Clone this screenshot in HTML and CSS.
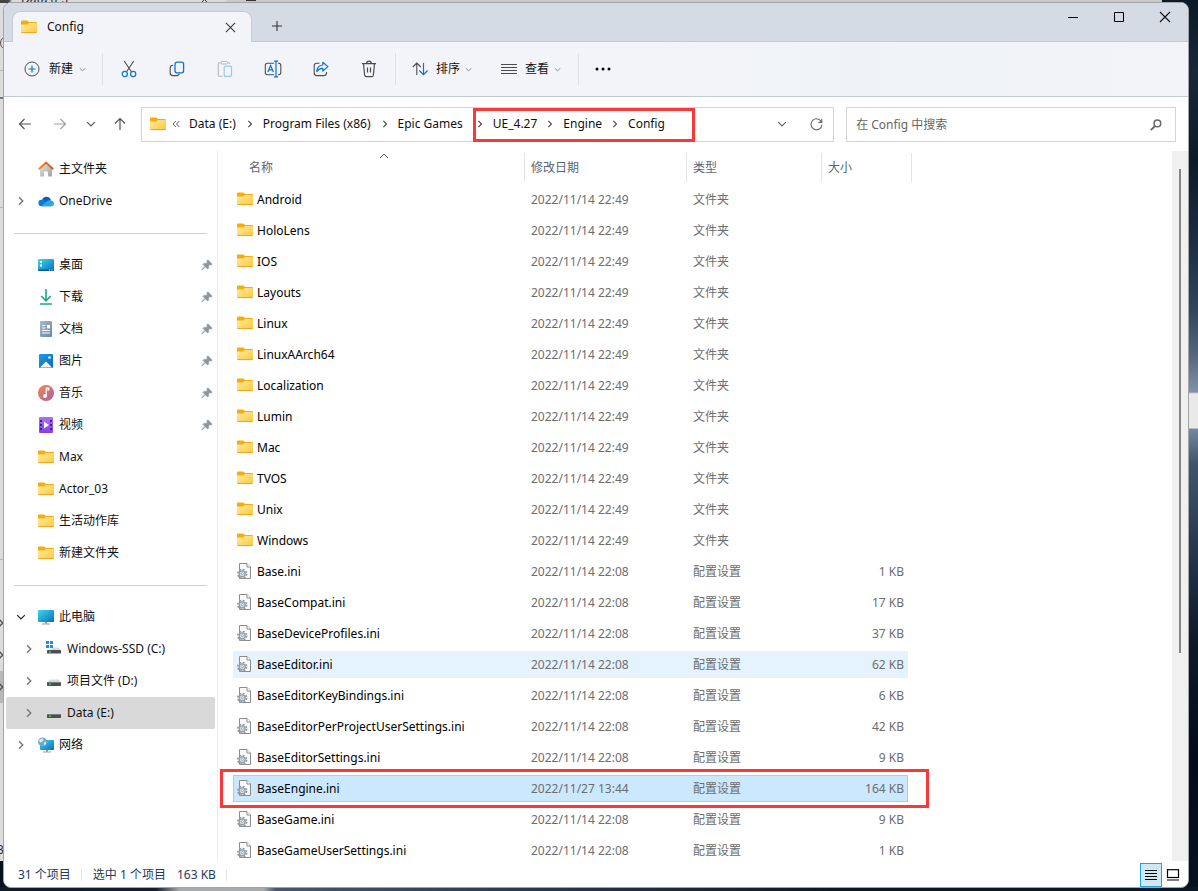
FILE: index.html
```html
<!DOCTYPE html>
<html lang="zh-CN">
<head>
<meta charset="utf-8">
<title>Config</title>
<link rel="stylesheet" href="styles.css">
</head>
<body>
<svg class="defs" width="0" height="0" aria-hidden="true">
  <defs>
    <linearGradient id="gFolder" x1="0" y1="0" x2="1" y2="1"><stop offset="0" stop-color="#ffe9a2"/><stop offset="1" stop-color="#fdc93a"/></linearGradient>
    <linearGradient id="gScreen" x1="0" y1="0" x2="1" y2="1"><stop offset="0" stop-color="#3ddbe2"/><stop offset="1" stop-color="#0a6cc4"/></linearGradient>
    <linearGradient id="gHome" x1="0" y1="0" x2="1" y2="1"><stop offset="0" stop-color="#e6e6e6"/><stop offset="1" stop-color="#a2a2a2"/></linearGradient>
    <linearGradient id="gRoof" x1="0" y1="0" x2="1" y2="0"><stop offset="0" stop-color="#f08a24"/><stop offset="1" stop-color="#d8531b"/></linearGradient>
    <linearGradient id="gDoc" x1="0" y1="0" x2="1" y2="1"><stop offset="0" stop-color="#a9bccf"/><stop offset="1" stop-color="#6785a5"/></linearGradient>
    <linearGradient id="gPic" x1="0" y1="0" x2="1" y2="1"><stop offset="0" stop-color="#1d9be8"/><stop offset="1" stop-color="#0a68bd"/></linearGradient>
    <linearGradient id="gMusic" x1="0" y1="0" x2="1" y2="1"><stop offset="0" stop-color="#f08a52"/><stop offset="1" stop-color="#b25a9e"/></linearGradient>
    <linearGradient id="gVideo" x1="0" y1="0" x2="0" y2="1"><stop offset="0" stop-color="#a873f0"/><stop offset="1" stop-color="#8a3de6"/></linearGradient>
  </defs>
  <symbol id="folder" viewBox="0 0 16 16">
    <path d="M0 2.5Q0 1.5 1 1.5H6Q6.6 1.5 7 2L8 3H15Q16 3 16 4V8H0Z" fill="#f5ad0b"/>
    <path d="M0 5.5H6.2L8 4H15Q16 4 16 5V13Q16 14 15 14H1Q0 14 0 13Z" fill="url(#gFolder)"/>
    <path d="M.4 13.6H15.6" stroke="#e3a21c" stroke-width=".9"/>
  </symbol>
  <symbol id="ini" viewBox="0 0 16 16">
    <path d="M2.5.5H10L13.5 4V15.5H2.5Z" fill="#f9f9f9" stroke="#8c8c8c"/>
    <path d="M10 .5V4H13.5" fill="#fff" stroke="#8c8c8c"/>
    <circle cx="5.2" cy="10.8" r="4.4" fill="none" stroke="#8e979d" stroke-width="1.6" stroke-dasharray="1.9 1.55"/>
    <circle cx="5.2" cy="10.8" r="3" fill="#e3e7ea" stroke="#929ba1" stroke-width="1.3"/>
    <circle cx="5.2" cy="10.8" r="1.1" fill="#fff" stroke="#929ba1" stroke-width=".8"/>
  </symbol>
  <symbol id="pin" viewBox="0 0 12 12">
    <path d="M6.8.8 11.2 5.2 10 5.9 8.5 5.8 7.5 7 7.6 9.2 6.6 10 4.4 7.8 1.2 11 .8 11 1 10.5 3.9 7.3 1.9 5.3 2.8 4.4 5 4.5 6.2 3.5 6 1.8Z" fill="#8b979f" stroke="#8b979f" stroke-width=".6"/>
  </symbol>
  <symbol id="right" viewBox="0 0 10 10"><path d="M3 1.2 6.8 5 3 8.8" fill="none" stroke="currentColor" stroke-width="1.4"/></symbol>
  <symbol id="down" viewBox="0 0 10 10"><path d="M1.2 3.2 5 7 8.8 3.2" fill="none" stroke="currentColor" stroke-width="1.2"/></symbol>
  <symbol id="drive" viewBox="0 0 16 16">
    <path d="M3.5 6.5H12.5L15 9.5H1Z" fill="#d8dbdd"/><rect x="1" y="9" width="14" height="4" rx=".7" fill="#4b4f52"/><rect x="1" y="9" width="14" height="1" fill="#777b7e"/><rect x="3" y="10.5" width="2" height="1.4" fill="#33e033"/>
  </symbol>
  <symbol id="close" viewBox="0 0 12 12"><path d="M1 1 11 11M11 1 1 11" stroke="currentColor" stroke-width="1.1"/></symbol>
</svg>

<div class="back-window" aria-hidden="true">
  <span class="back-title">Data (E:)</span>
  <svg class="back-close" width="9" height="9"><use href="#close"/></svg>
  <span class="back-plus"></span>
  <span class="back-line back-line-a"></span>
  <span class="back-line back-line-b"></span>
  <span class="back-line back-line-c"></span>
  <span class="back-line back-line-d"></span>
  <span class="back-circle"></span>
  <span class="back-selected"></span>
  <svg class="back-arrow back-arrow-a" width="10" height="10"><use href="#right"/></svg>
  <svg class="back-arrow back-arrow-b" width="10" height="10"><use href="#right"/></svg>
  <svg class="back-arrow back-arrow-c" width="10" height="10"><use href="#right"/></svg>
  <span class="back-count">3</span>
</div>

<div class="window">
  <header class="titlebar">
    <div class="tab">
      <svg class="icon" width="16" height="16"><use href="#folder"/></svg>
      <span class="tab-title">Config</span>
      <button class="tab-close" aria-label="关闭标签页"><svg width="11" height="11"><use href="#close"/></svg></button>
    </div>
    <button class="tab-new" aria-label="新标签页"><svg width="12" height="12" viewBox="0 0 12 12"><path d="M6 1V11M1 6H11" stroke="#333" stroke-width="1.1"/></svg></button>
    <div class="caption">
      <button aria-label="最小化"><svg width="12" height="12"><path d="M1 6.5H11" stroke="#000"/></svg></button>
      <button aria-label="最大化"><svg width="12" height="12"><rect x="1.5" y="1.5" width="9" height="9" rx=".6" fill="none" stroke="#000" stroke-width="1.1"/></svg></button>
      <button aria-label="关闭"><svg width="12" height="12"><use href="#close"/></svg></button>
    </div>
  </header>

  <div class="toolbar">
    <button class="tool new">
      <svg width="16" height="16" viewBox="0 0 16 16" fill="none"><circle cx="8" cy="8" r="7" stroke="#4c4c4c"/><path d="M8 4.5V11.5M4.5 8H11.5" stroke="#0a74d0" stroke-width="1.2"/></svg>
      <span>新建</span><svg class="caret" width="7" height="7"><use href="#down"/></svg>
    </button>
    <span class="divider"></span>
    <div class="tool-group">
      <button class="tool-icon" aria-label="剪切"><svg width="16" height="18" viewBox="0 0 16 18" fill="none"><path d="M3.2 1 10.6 12M12.8 1 5.4 12" stroke="#4c4c4c" stroke-width="1.1"/><circle cx="3.8" cy="14" r="2.6" stroke="#0a74d0" stroke-width="1.2"/><circle cx="12.2" cy="14" r="2.6" stroke="#0a74d0" stroke-width="1.2"/></svg></button>
      <button class="tool-icon" aria-label="复制"><svg width="16" height="16" viewBox="0 0 16 16" fill="none"><path d="M4.2 4.2Q1.2 4.2 1.2 7V12Q1.2 14.6 4 14.6H7.5Q10 14.6 10.3 12.6" stroke="#4c4c4c" stroke-width="1.1"/><rect x="6" y="1.2" width="8.6" height="10.6" rx="2" stroke="#0a74d0" stroke-width="1.3"/></svg></button>
      <button class="tool-icon" aria-label="粘贴" disabled><svg width="16" height="18" viewBox="0 0 16 18" fill="none"><path d="M5.5 16.3H2.5Q1.3 16.3 1.3 15V4Q1.3 2.8 2.5 2.8H4M10.5 2.8H11.5Q12.7 2.8 12.7 4" stroke="#b7b9bc" stroke-width="1.1"/><rect x="4" y="1.4" width="6.5" height="2.6" rx="1.2" stroke="#b7b9bc"/><rect x="7.2" y="6.2" width="7.3" height="10.2" rx="1.2" stroke="#9ac7eb" stroke-width="1.2"/></svg></button>
      <button class="tool-icon" aria-label="重命名"><svg width="18" height="18" viewBox="0 0 18 18" fill="none"><path d="M10 3.3H3.5Q1.3 3.3 1.3 5.5V12.5Q1.3 14.7 3.5 14.7H10M14 3.3H14.8Q16.8 3.3 16.8 5.5V12.5Q16.8 14.7 14.8 14.7H14" stroke="#4c4c4c" stroke-width="1.1"/><path d="M3.8 12 6.6 5.6 9.4 12M4.8 9.8H8.4M12 1.5V16.5M10 1.2H14M10 16.8H14" stroke="#0a74d0" stroke-width="1.2"/></svg></button>
      <button class="tool-icon" aria-label="共享"><svg width="16" height="16" viewBox="0 0 16 16" fill="none"><path d="M6.5 2.2H3.8Q1.2 2.2 1.2 4.6V12Q1.2 14.6 3.8 14.6H11Q13.5 14.6 13.5 12V11" stroke="#4c4c4c" stroke-width="1.1"/><path d="M9.8 1.3 15 5.6 9.8 10V7.4Q6 7.2 3.8 10.6Q4 4.6 9.8 4Z" stroke="#0a74d0" stroke-width="1.2" stroke-linejoin="round"/></svg></button>
      <button class="tool-icon" aria-label="删除"><svg width="16" height="18" viewBox="0 0 16 18" fill="none"><path d="M1 3.6H15M5.6 3.4Q5.8 1.2 8 1.2T10.4 3.4M2.5 3.8 3.6 15Q3.8 16.7 5.4 16.7H10.6Q12.2 16.7 12.4 15L13.5 3.8M6.5 7.5V12.5M9.5 7.5V12.5" stroke="#4c4c4c" stroke-width="1.2"/></svg></button>
    </div>
    <span class="divider"></span>
    <button class="tool sort">
      <svg width="16" height="14" viewBox="0 0 16 14" fill="none"><path d="M4.8 13V1M.8 5 4.8 1 8.8 5" stroke="#4c4c4c" stroke-width="1.1"/><path d="M11.5 1V12.5M7.3 8.5 11.5 12.6 15.6 8.5" stroke="#0a74d0" stroke-width="1.2"/></svg>
      <span>排序</span><svg class="caret" width="7" height="7"><use href="#down"/></svg>
    </button>
    <button class="tool view">
      <svg width="16" height="12" viewBox="0 0 16 12"><path d="M0 1.5H16M0 4.5H16M0 7.5H16M0 10.5H16" stroke="#4c4c4c"/></svg>
      <span>查看</span><svg class="caret" width="7" height="7"><use href="#down"/></svg>
    </button>
    <span class="divider"></span>
    <button class="tool-icon" aria-label="更多"><svg width="18" height="4"><circle cx="3" cy="2" r="1.5"/><circle cx="9" cy="2" r="1.5"/><circle cx="15" cy="2" r="1.5"/></svg></button>
  </div>

  <nav class="address-row">
    <div class="nav-buttons">
      <button aria-label="后退"><svg width="14" height="12" viewBox="0 0 14 12" fill="none" stroke="#555" stroke-width="1.2"><path d="M13 6H1.5M6.5 1 1.5 6 6.5 11"/></svg></button>
      <button aria-label="前进" disabled><svg width="14" height="12" viewBox="0 0 14 12" fill="none" stroke="#a0a0a0" stroke-width="1.2"><path d="M1 6H12.5M7.5 1 12.5 6 7.5 11"/></svg></button>
      <button aria-label="最近位置"><svg width="10" height="10" color="#555"><use href="#down"/></svg></button>
      <button aria-label="向上"><svg width="12" height="14" viewBox="0 0 12 14" fill="none" stroke="#555" stroke-width="1.2"><path d="M6 13V1.5M1 6.5 6 1.5 11 6.5"/></svg></button>
    </div>
    <div class="address">
      <svg class="icon" width="16" height="16"><use href="#folder"/></svg>
      <svg class="more" width="8" height="8" viewBox="0 0 8 8" fill="none" stroke="#555"><path d="M3.8 1 1 4 3.8 7M7.3 1 4.5 4 7.3 7"/></svg>
      <a href="#">Data (E:)</a><svg class="sep" width="8" height="8"><use href="#right"/></svg>
      <a href="#">Program Files (x86)</a><svg class="sep" width="8" height="8"><use href="#right"/></svg>
      <a href="#">Epic Games</a>
      <div class="crumb-mark"><svg class="sep" width="8" height="8"><use href="#right"/></svg>
        <a href="#">UE_4.27</a><svg class="sep" width="8" height="8"><use href="#right"/></svg>
        <a href="#">Engine</a><svg class="sep" width="8" height="8"><use href="#right"/></svg>
        <a href="#">Config</a></div>
      <div class="address-end">
        <button aria-label="以前的位置"><svg width="10" height="10"><use href="#down"/></svg></button>
        <button aria-label="刷新"><svg width="13" height="13" viewBox="0 0 13 13" fill="none" stroke="#666" stroke-width="1.1"><path d="M11.6 4.2A5.5 5.5 0 1 0 12 6.8M11.8 1V4.4H8.4"/></svg></button>
      </div>
    </div>
    <div class="search">
      <input type="search" aria-label="搜索" placeholder="在 Config 中搜索">
      <button aria-label="搜索"><svg width="12" height="12" viewBox="0 0 12 12" fill="none" stroke="#666"><circle cx="7.4" cy="4.4" r="3.3" stroke-width="1.5"/><path d="M5 7 .8 11.2" stroke-width="1.8"/></svg></button>
    </div>
  </nav>

  <main class="content">
    <aside class="sidebar">
      <a class="item" href="#"><svg class="icon" width="16" height="16" viewBox="0 0 16 16"><path d="M2 7 8 2 14 7V15.5H10V10.5H6V15.5H2Z" fill="url(#gHome)"/><path d="M.8 8.2 8 1.6 15.2 8.2" fill="none" stroke="url(#gRoof)" stroke-width="1.9"/></svg>主文件夹</a>
      <a class="item" href="#"><svg class="twisty" width="10" height="10"><use href="#right"/></svg><svg class="icon" width="16" height="16" viewBox="0 0 16 16"><path d="M4 7.2A4.6 4.6 0 0 1 12.8 7L9 11Z" fill="#0b62b8"/><path d="M3.6 13.2A3.2 3.2 0 0 1 3.6 6.8Q5.5 6.4 8 8.5L13 13.2Z" fill="#0f7ad6"/><path d="M3 13.2 8.8 8.5Q10.5 6.8 12.6 7.3 15.8 7.8 16 10.4 15.8 13.2 13 13.2Z" fill="#28a8ea"/></svg>OneDrive</a>
      <hr>
      <a class="item" href="#"><svg class="icon" width="16" height="16" viewBox="0 0 16 16"><rect y="2" width="16" height="12" rx="1" fill="url(#gScreen)"/><path d="M0 12.5H16V13Q16 14 15 14H1Q0 14 0 13Z" fill="#0a58a5"/><path d="M2 4H4V6H2ZM2 7.5H4V9.5H2ZM11 12.5H12V13.5H11ZM13.5 12.5H14.5V13.5H13.5Z" fill="#fff"/></svg>桌面<svg class="pin" width="12" height="12"><use href="#pin"/></svg></a>
      <a class="item" href="#"><svg class="icon" width="16" height="16" viewBox="0 0 16 16" fill="none" stroke="#18aa8c" stroke-width="1.6"><path d="M8 0V11.5M3.2 7 8 11.8 12.8 7M2 15H14"/></svg>下载<svg class="pin" width="12" height="12"><use href="#pin"/></svg></a>
      <a class="item" href="#"><svg class="icon" width="16" height="16" viewBox="0 0 16 16"><rect x="2" width="12" height="16" rx="1" fill="url(#gDoc)"/><path d="M4.2 4.5H7.5M4.2 7H7.5M4.2 9.5H12M4.2 12H12" stroke="#fff" stroke-width="1.2"/><rect x="9" y="4" width="3" height="3.4" fill="#fff"/></svg>文档<svg class="pin" width="12" height="12"><use href="#pin"/></svg></a>
      <a class="item" href="#"><svg class="icon" width="16" height="16" viewBox="0 0 16 16"><rect x="1" y="1" width="14" height="14" rx="1" fill="url(#gPic)"/><path d="M2 14.5 8 8.5 14 14.5Z" fill="#fff"/><circle cx="11.5" cy="4.5" r="1.3" fill="#fff"/></svg>图片<svg class="pin" width="12" height="12"><use href="#pin"/></svg></a>
      <a class="item" href="#"><svg class="icon" width="16" height="16" viewBox="0 0 16 16"><circle cx="8" cy="8" r="8" fill="url(#gMusic)"/><path d="M8.2 11V3.2H10.8V5H9" stroke="#fff" stroke-width="1.2" fill="none"/><circle cx="7" cy="11" r="1.9" fill="#fff"/></svg>音乐<svg class="pin" width="12" height="12"><use href="#pin"/></svg></a>
      <a class="item" href="#"><svg class="icon" width="16" height="16" viewBox="0 0 16 16"><rect x="1" width="14" height="16" rx="1" fill="url(#gVideo)"/><path d="M2 3H4V5H2ZM2 7H4V9H2ZM2 11H4V13H2ZM12 3H14V5H12ZM12 7H14V9H12ZM12 11H14V13H12Z" fill="#4a1f8c"/><path d="M6 4.5V11.5L11 8Z" fill="#fff"/></svg>视频<svg class="pin" width="12" height="12"><use href="#pin"/></svg></a>
      <a class="item" href="#"><svg class="icon" width="16" height="16"><use href="#folder"/></svg>Max</a>
      <a class="item" href="#"><svg class="icon" width="16" height="16"><use href="#folder"/></svg>Actor_03</a>
      <a class="item" href="#"><svg class="icon" width="16" height="16"><use href="#folder"/></svg>生活动作库</a>
      <a class="item" href="#"><svg class="icon" width="16" height="16"><use href="#folder"/></svg>新建文件夹</a>
      <hr>
      <a class="item" href="#"><svg class="twisty open" width="10" height="10"><use href="#down"/></svg><svg class="icon" width="16" height="16" viewBox="0 0 16 16"><rect y="1" width="16" height="12" rx=".8" fill="url(#gScreen)"/><path d="M7 13H9V14.5H12V15.5H4V14.5H7Z" fill="#8fa3b1"/></svg>此电脑</a>
      <a class="item child" href="#"><svg class="twisty" width="10" height="10"><use href="#right"/></svg><svg class="icon" width="16" height="16" viewBox="0 0 16 16"><path d="M7 6.5H12.5L15 9.5H3Z" fill="#d8dbdd"/><rect x="1" y="9" width="14" height="3.6" rx=".7" fill="#4b4f52"/><rect x="3" y="10.2" width="2" height="1.4" fill="#33e033"/><path d="M0 0H3V3H0ZM4 0H7V3H4ZM0 4H3V7H0ZM4 4H7V7H4Z" fill="#1a8fe3"/></svg>Windows-SSD (C:)</a>
      <a class="item child" href="#"><svg class="twisty" width="10" height="10"><use href="#right"/></svg><svg class="icon" width="16" height="16"><use href="#drive"/></svg>项目文件 (D:)</a>
      <a class="item child current" href="#" aria-current="page"><svg class="twisty" width="10" height="10"><use href="#right"/></svg><svg class="icon" width="16" height="16"><use href="#drive"/></svg>Data (E:)</a>
      <a class="item" href="#"><svg class="twisty" width="10" height="10"><use href="#right"/></svg><svg class="icon" width="16" height="16" viewBox="0 0 16 16"><rect x="2" y="3" width="14" height="10" rx=".8" fill="url(#gScreen)"/><path d="M8 13H10V14.5H13V15.5H5V14.5H8Z" fill="#8fa3b1"/><circle cx="4.5" cy="4.8" r="4.4" fill="#6da9cf"/><path d="M1 3.5Q3 1 5 1.5L5.5 3.5 3.5 5 2 5.5ZM6 5.5 8 4.5 8 7 6 8.5Z" fill="#d6edf7"/></svg>网络</a>
    </aside>

    <section class="files">
      <table>
        <thead>
          <tr><th class="c-name" scope="col">名称<svg class="sorted" width="10" height="6" viewBox="0 0 10 6" fill="none" stroke="#555"><path d="M1 5 5 1 9 5"/></svg></th><th class="c-date" scope="col">修改日期</th><th class="c-type" scope="col">类型</th><th class="c-size" scope="col">大小</th></tr>
        </thead>
        <tbody>
          <tr><td><svg class="icon" width="16" height="16"><use href="#folder"/></svg>Android</td><td>2022/11/14 22:49</td><td>文件夹</td><td></td></tr>
          <tr><td><svg class="icon" width="16" height="16"><use href="#folder"/></svg>HoloLens</td><td>2022/11/14 22:49</td><td>文件夹</td><td></td></tr>
          <tr><td><svg class="icon" width="16" height="16"><use href="#folder"/></svg>IOS</td><td>2022/11/14 22:49</td><td>文件夹</td><td></td></tr>
          <tr><td><svg class="icon" width="16" height="16"><use href="#folder"/></svg>Layouts</td><td>2022/11/14 22:49</td><td>文件夹</td><td></td></tr>
          <tr><td><svg class="icon" width="16" height="16"><use href="#folder"/></svg>Linux</td><td>2022/11/14 22:49</td><td>文件夹</td><td></td></tr>
          <tr><td><svg class="icon" width="16" height="16"><use href="#folder"/></svg>LinuxAArch64</td><td>2022/11/14 22:49</td><td>文件夹</td><td></td></tr>
          <tr><td><svg class="icon" width="16" height="16"><use href="#folder"/></svg>Localization</td><td>2022/11/14 22:49</td><td>文件夹</td><td></td></tr>
          <tr><td><svg class="icon" width="16" height="16"><use href="#folder"/></svg>Lumin</td><td>2022/11/14 22:49</td><td>文件夹</td><td></td></tr>
          <tr><td><svg class="icon" width="16" height="16"><use href="#folder"/></svg>Mac</td><td>2022/11/14 22:49</td><td>文件夹</td><td></td></tr>
          <tr><td><svg class="icon" width="16" height="16"><use href="#folder"/></svg>TVOS</td><td>2022/11/14 22:49</td><td>文件夹</td><td></td></tr>
          <tr><td><svg class="icon" width="16" height="16"><use href="#folder"/></svg>Unix</td><td>2022/11/14 22:49</td><td>文件夹</td><td></td></tr>
          <tr><td><svg class="icon" width="16" height="16"><use href="#folder"/></svg>Windows</td><td>2022/11/14 22:49</td><td>文件夹</td><td></td></tr>
          <tr><td><svg class="icon" width="16" height="16"><use href="#ini"/></svg>Base.ini</td><td>2022/11/14 22:08</td><td>配置设置</td><td>1 KB</td></tr>
          <tr><td><svg class="icon" width="16" height="16"><use href="#ini"/></svg>BaseCompat.ini</td><td>2022/11/14 22:08</td><td>配置设置</td><td>17 KB</td></tr>
          <tr><td><svg class="icon" width="16" height="16"><use href="#ini"/></svg>BaseDeviceProfiles.ini</td><td>2022/11/14 22:08</td><td>配置设置</td><td>37 KB</td></tr>
          <tr class="hovered"><td><svg class="icon" width="16" height="16"><use href="#ini"/></svg>BaseEditor.ini</td><td>2022/11/14 22:08</td><td>配置设置</td><td>62 KB</td></tr>
          <tr><td><svg class="icon" width="16" height="16"><use href="#ini"/></svg>BaseEditorKeyBindings.ini</td><td>2022/11/14 22:08</td><td>配置设置</td><td>6 KB</td></tr>
          <tr><td><svg class="icon" width="16" height="16"><use href="#ini"/></svg>BaseEditorPerProjectUserSettings.ini</td><td>2022/11/14 22:08</td><td>配置设置</td><td>42 KB</td></tr>
          <tr><td><svg class="icon" width="16" height="16"><use href="#ini"/></svg>BaseEditorSettings.ini</td><td>2022/11/14 22:08</td><td>配置设置</td><td>9 KB</td></tr>
          <tr class="selected"><td><svg class="icon" width="16" height="16"><use href="#ini"/></svg>BaseEngine.ini</td><td>2022/11/27 13:44</td><td>配置设置</td><td>164 KB</td></tr>
          <tr><td><svg class="icon" width="16" height="16"><use href="#ini"/></svg>BaseGame.ini</td><td>2022/11/14 22:08</td><td>配置设置</td><td>9 KB</td></tr>
          <tr><td><svg class="icon" width="16" height="16"><use href="#ini"/></svg>BaseGameUserSettings.ini</td><td>2022/11/14 22:08</td><td>配置设置</td><td>1 KB</td></tr>
        </tbody>
      </table>
    </section>
    <div class="scrollbar"><div class="thumb"></div></div>
  </main>

  <footer class="statusbar">
    <span class="status-item">31 个项目</span>
    <span class="status-item"><span>选中 1 个项目</span><span>163 KB</span></span>
    <div class="view-switch">
      <button class="active" aria-label="详细信息"><svg width="14" height="12" viewBox="0 0 14 12"><path d="M1 1.5H13M1 4.5H13M1 7.5H13M1 10.5H13" stroke="#000"/></svg></button>
      <button aria-label="大图标"><svg width="14" height="12" viewBox="0 0 14 12"><rect x="1.5" y=".7" width="11" height="7.8" fill="#fff" stroke="#000" stroke-width="1.2"/><path d="M1 11H13" stroke="#000"/></svg></button>
    </div>
  </footer>
</div>
</body>
</html>
```

FILE: styles.css
```css
*, *::before, *::after { box-sizing: border-box; }

body {
  margin: 0;
  height: 100vh;
  padding: 2px 9px 3px 3px;
  overflow: hidden;
  position: relative;
  font: 12px/18px "Noto Sans", "Noto Sans CJK SC", sans-serif;
  color: #111;
  background:
    linear-gradient(90deg, #0d1c2b 0 1%, #10202f 13%, #a8abae 15% 22%, #46586b 23%, #26394b 45%, #0a1824 70%) bottom / 100% 4px no-repeat,
    linear-gradient(#0c1a27 0, #16283a 8%, #0c1b29 18%, #1c2d41 27%, #33465e 35%, #56677f 40%, #8291a8 44%, #e9e9e9 44.2% 48%, #7486a0 48.2%, #43556d 52%, #2b3c52 60%, #0c1a28 72%, #020c18 85%, #06121e 100%);
}

button {
  font: inherit;
  color: inherit;
  border: 0;
  padding: 0;
  background: none;
  display: flex;
  align-items: center;
  justify-content: center;
}

a { color: inherit; text-decoration: none; }
svg { display: block; flex: none; }
.defs { position: absolute; }

/* Window showing behind the active one */
.back-window {
  position: absolute;
  top: 0;
  left: 0;
  right: 36px;
  bottom: 30px;
  overflow: hidden;
  background: linear-gradient(90deg, #444 0 9px, #dadada 12px 225px, #c9c9c9 228px) top / 100% 3px no-repeat, #dcdcdc;
}
.back-window > * { position: absolute; }
.back-title { left: 21px; top: -10px; line-height: 18px; color: #222; }
.back-close { left: 200px; top: -5px; }
.back-plus { left: 246px; top: 0; width: 10px; height: 1px; background: #333; }
.back-line { left: 0; width: 4px; height: 1px; background: #b4b4b4; }
.back-line-a { top: 70px; }
.back-line-b { top: 97px; height: 2px; background: #777; }
.back-line-c { top: 207px; }
.back-line-d { top: 559px; }
.back-circle { left: 0; top: 36px; width: 14px; height: 14px; border: 1px solid #555; border-radius: 50%; }
.back-selected { left: 0; top: 671px; width: 4px; height: 32px; background: #b8b8b8; }
.back-arrow { left: -4px; color: #555; }
.back-arrow-a { top: 618px; }
.back-arrow-b { top: 650px; }
.back-arrow-c { top: 682px; }
.back-count { left: -3px; top: 841px; color: #234; }

.window {
  position: relative;
  height: 100%;
  display: flex;
  flex-direction: column;
  overflow: hidden;
  background: #fff;
  border: 1px solid #a2a4a6;
  border-radius: 8px;
}

.titlebar {
  flex: none;
  height: 39px;
  display: flex;
  background: #d4dbe5;
  border-bottom: 1px solid #c3cad4;
  padding: 8px 0 0 8px;
}
.tab {
  width: 240px;
  height: 31px;
  display: flex;
  align-items: center;
  padding: 0 15px 0 8px;
  background: #f3f4f9;
  border: 1px solid #c3cad4;
  border-bottom: 0;
  border-radius: 8px 8px 0 0;
}
.tab-title { margin-left: 10px; flex: 1; }
.tab-close { width: 12px; height: 20px; color: #333; }
.tab-new { width: 32px; height: 30px; margin-left: 9px; }
.caption { display: flex; margin: -8px 0 0 auto; }
.caption button { width: 46px; height: 28px; }

.toolbar {
  flex: none;
  height: 55px;
  display: flex;
  align-items: center;
  background: linear-gradient(90deg, #f3f4f9 55%, #eff3f8 72%, #f3f3f8);
  border-bottom: 1px solid #c3cad4;
}
.tool { height: 32px; gap: 8px; }
.tool.new { gap: 9px; padding: 0 16px 0 20px; }
.tool.sort { padding-left: 16px; }
.tool.view { padding: 0 17px 0 29px; }
.tool .caret { color: #777; margin-left: -3px; }
.divider { width: 1px; height: 32px; background: #dfe1e6; }
.tool-group { display: flex; padding: 0 2px; }
.tool-icon { width: 48px; height: 32px; }

.address-row {
  flex: none;
  display: flex;
  padding: 10px 12px 9px 6px;
}
.nav-buttons { display: flex; width: 131px; }
.nav-buttons button { width: 30px; height: 34px; }
.nav-buttons button:nth-child(2) { width: 40px; }
.nav-buttons button:nth-child(3) { width: 22px; }
.nav-buttons button:nth-child(4) { width: 36px; }
.address, .search {
  display: flex;
  align-items: center;
  height: 35px;
  border: 1px solid #d4d4d4;
}
.address { flex: 67 1 0; padding: 0 0 1px 8px; }
.address .more { margin: 0 9px 0 6px; }
.address .sep { margin: 0 9px 0 10px; color: #444; }
.crumb-mark {
  position: relative;
  display: flex;
  align-items: center;
  margin-left: 4px;
}
.address .crumb-mark .sep { margin-left: 9px; }
.crumb-mark::after {
  content: "";
  position: absolute;
  inset: -7px -30px -9px 6px;
  border: 3px solid #fb3838;
}
.address-end { display: flex; margin-left: auto; color: #666; }
.address-end button { width: 34px; height: 32px; }
.search { flex: 30 1 0; margin-left: 12px; padding: 0 13px 0 9px; }
.search input {
  flex: 1;
  min-width: 0;
  border: 0;
  padding: 0;
  outline: 0;
  font: inherit;
  background: none;
}
.search input::placeholder { color: #666; opacity: 1; }

.content { flex: 1; min-height: 0; display: flex; }

.sidebar { flex: none; width: 214px; padding: 2px 2px 0 2px; border-right: 1px solid #ededed; }
.item {
  position: relative;
  display: flex;
  align-items: center;
  height: 32px;
  padding-left: 32px;
  border-radius: 2px;
}
.item .icon { margin-right: 5px; }
.item.child { padding-left: 40px; }
.item.current { background: #d9d9d9; }
.twisty { position: absolute; left: 10px; color: #777; }
.twisty.open { color: #222; }
.child .twisty { left: 18px; }
.pin { margin-left: auto; margin-right: 2px; }
.sidebar hr { border: 0; height: 1px; margin: 16px 8px 15px 8px; background: #d0d0d0; }

.files { flex: 1; min-width: 0; overflow: hidden; padding-left: 15px; }
table {
  width: 675px;
  table-layout: fixed;
  border-collapse: separate;
  border-spacing: 0 4px;
  margin-top: -2px;
}
th {
  position: relative;
  height: 29px;
  padding: 0 6px;
  font-weight: 400;
  text-align: left;
  color: #5a6577;
  border-right: 1px solid #e3e3e3;
}
.c-name { width: 292px; padding-left: 16px; }
.c-date { width: 162px; }
.c-type { width: 135px; }
.c-size { border-right: 0; }
.c-size::after {
  content: "";
  position: absolute;
  inset: 0 -4px 0 auto;
  width: 1px;
  background: #e3e3e3;
}
.sorted { position: absolute; left: 50%; top: 0; }
td {
  height: 27px;
  padding: 0 6px;
  color: #6d6d6d;
  white-space: nowrap;
  border: solid transparent;
  border-width: 1px 0;
}
td:first-child { position: relative; color: #000; padding-left: 3px; border-left-width: 1px; }
td:last-child { text-align: right; padding-right: 3px; border-right-width: 1px; }
td .icon { display: inline-block; vertical-align: middle; margin: -2px 4px 0 0; }
.hovered td { background: #e5f3ff; border-color: #e5f3ff; }
.selected td { background: #cce8ff; border-color: #99d1ff; }
.selected td:first-child::after {
  content: "";
  position: absolute;
  z-index: 1;
  top: -7px;
  bottom: -7px;
  left: -14px;
  width: 709px;
  border: 3px solid #fb3838;
}

.scrollbar { flex: none; width: 16px; padding: 18px 7px 0; background: #f0f0f0; }
.thumb { height: 70%; background: #858585; }

.statusbar {
  flex: none;
  height: 26px;
  display: flex;
  align-items: center;
  padding-top: 2px;
  color: #1e395b;
}
.status-item {
  display: flex;
  gap: 11px;
  height: 12px;
  align-items: center;
  padding: 0 10px 0 11px;
  border-right: 1px solid #e6e6e6;
}
.status-item:first-child { padding-left: 14px; }
.view-switch { display: flex; margin: 0 4px 0 auto; }
.view-switch button { width: 22px; height: 24px; }
.view-switch .active { background: #cce8f6; border: 1px solid #26a0da; }
```
